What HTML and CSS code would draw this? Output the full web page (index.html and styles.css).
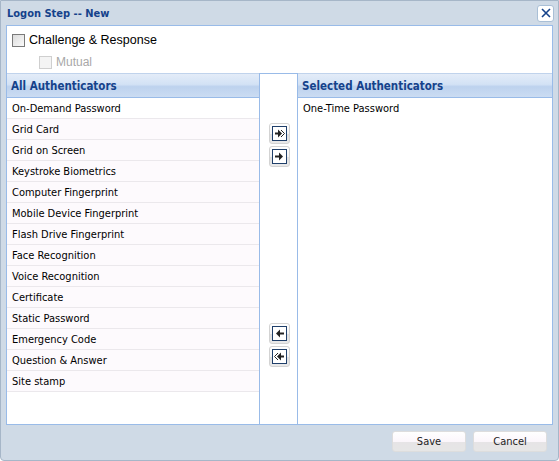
FILE: index.html
```html
<!DOCTYPE html>
<html lang="en">
<head>
    <meta charset="UTF-8">
    <title>Logon Step -- New</title>
    <link rel="stylesheet" href="styles.css">
</head>
<body>
<div class="win">
    <div class="win-head">
        <span class="win-title">Logon Step -- New</span>
        <a class="win-close" href="javascript:;">
            <svg width="14" height="14" viewBox="0 0 14 14"><path d="M3 3 L11 11 M11 3 L3 11" stroke="#15428b" stroke-width="1.6"/></svg>
        </a>
    </div>
    <div class="win-body">
        <div class="opts">
            <label class="chk"><span class="box"></span>Challenge &amp; Response</label>
            <label class="chk sub off"><span class="box"></span>Mutual</label>
        </div>
        <div class="lists">
            <div class="panel left">
                <div class="panel-head">All Authenticators</div>
                <ul class="rows">
                    <li>On-Demand Password</li>
                    <li>Grid Card</li>
                    <li>Grid on Screen</li>
                    <li>Keystroke Biometrics</li>
                    <li>Computer Fingerprint</li>
                    <li>Mobile Device Fingerprint</li>
                    <li>Flash Drive Fingerprint</li>
                    <li>Face Recognition</li>
                    <li>Voice Recognition</li>
                    <li>Certificate</li>
                    <li>Static Password</li>
                    <li>Emergency Code</li>
                    <li>Question &amp; Answer</li>
                    <li>Site stamp</li>
                </ul>
            </div>
            <div class="mid">
                <div class="btns top">
                    <a class="mv"><svg width="15" height="15" viewBox="0 0 15 15"><rect x="0.5" y="0.5" width="14" height="14" fill="#fff" stroke="#1f3f6a"/><path d="M3 6.5h3v-3l4 4-4 4v-3H3z" fill="#222"/><path d="M9 4l3.5 3.5L9 11" fill="none" stroke="#222" stroke-width="1"/></svg></a>
                    <a class="mv"><svg width="15" height="15" viewBox="0 0 15 15"><rect x="0.5" y="0.5" width="14" height="14" fill="#fff" stroke="#1f3f6a"/><path d="M3 6.5h4v-3l4 4-4 4v-3H3z" fill="#222"/></svg></a>
                </div>
                <div class="btns bottom">
                    <a class="mv"><svg width="15" height="15" viewBox="0 0 15 15"><rect x="0.5" y="0.5" width="14" height="14" fill="#fff" stroke="#1f3f6a"/><path d="M12 6.5H8v-3l-4 4 4 4v-3h4z" fill="#222"/></svg></a>
                    <a class="mv"><svg width="15" height="15" viewBox="0 0 15 15"><rect x="0.5" y="0.5" width="14" height="14" fill="#fff" stroke="#1f3f6a"/><path d="M12 6.5H9v-3l-4 4 4 4v-3h3z" fill="#222"/><path d="M6 4L2.5 7.5 6 11" fill="none" stroke="#222" stroke-width="1"/></svg></a>
                </div>
            </div>
            <div class="panel right">
                <div class="panel-head">Selected Authenticators</div>
                <ul class="rows plain">
                    <li>One-Time Password</li>
                </ul>
            </div>
        </div>
    </div>
    <div class="win-foot">
        <a class="btn" href="javascript:;">Save</a>
        <a class="btn" href="javascript:;">Cancel</a>
    </div>
</div>
</body>
</html>
```
FILE: styles.css
```css
*{
    margin: 0;
    padding: 0;
    box-sizing: border-box;
}
a{
    text-decoration: none;
    color: inherit;
}
body{
    font: 11px "DejaVu Sans Condensed", "DejaVu Sans", Tahoma, sans-serif;
    color: #000;
    background: #fff;
}
.win{
    width: 559px;
    height: 461px;
    background: #cfdae6;
    border: 1px solid #a6b6c8;
    border-radius: 0 0 4px 4px;
    display: flex;
    flex-direction: column;
}
.win-head{
    height: 24px;
    display: flex;
    align-items: center;
    justify-content: space-between;
    padding: 0 4px 0 6px;
}
.win-title{
    font-weight: bold;
    color: #15428b;
    font-size: 11px;
}
.win-close{
    width: 17px;
    height: 17px;
    border: 1px solid #a9bfd6;
    border-radius: 3px;
    background: #fff;
    display: flex;
    align-items: center;
    justify-content: center;
}
.win-body{
    margin: 0 5px;
    height: 400px;
    background: #fff;
    border: 1px solid #99bbe8;
    display: flex;
    flex-direction: column;
}
.opts{
    height: 47px;
    padding: 5px 0 0 5px;
}
.chk{
    display: flex;
    align-items: center;
    gap: 4px;
    font: 12.5px "Liberation Sans", Arial, sans-serif;
    height: 18px;
}
.chk .box{
    width: 13px;
    height: 13px;
    border: 1px solid #7a7a7a;
    background: linear-gradient(135deg, #dcdcdc, #fafafa);
}
.chk.sub{
    margin: 4px 0 0 27px;
    font-size: 12px;
}
.chk.off{
    color: #a8a8a8;
}
.chk.off .box{
    border-color: #cfcfcf;
    background: #f4f4f4;
}
.lists{
    flex: 1;
    display: flex;
}
.panel{
    display: flex;
    flex-direction: column;
}
.left{
    width: 252px;
}
.right{
    flex: 1;
}
.panel-head{
    height: 25px;
    padding: 5px 0 0 4px;
    font-weight: bold;
    font-size: 11.5px;
    color: #15428b;
    border-top: 1px solid #c0d3ec;
    border-bottom: 1px solid #99bbe8;
    background: linear-gradient(#e3ecf8, #d3e2f5 45%, #bdd2ee 55%, #cbdcf2);
}
.rows{
    list-style: none;
}
.rows li{
    height: 21px;
    line-height: 21px;
    padding-left: 5px;
    border-bottom: 1px solid #ebe8ec;
    background: #fdfafd;
}
.rows li:first-child{
    background: #fff;
}
.rows.plain li{
    border-bottom: none;
    background: #fff;
}
.mid{
    width: 39px;
    border: 1px solid #99bbe8;
    border-bottom: none;
    display: flex;
    flex-direction: column;
    align-items: center;
    padding-top: 49px;
}
.btns{
    display: flex;
    flex-direction: column;
    gap: 2px;
    margin-left: 1px;
}
.btns.bottom{
    margin-top: 156px;
}
.mv{
    width: 21px;
    height: 21px;
    border: 1px solid #d3d3d3;
    border-radius: 3px;
    background: linear-gradient(#fff, #f3f3f3 50%, #dedede 51%, #e9e9e9);
    display: flex;
    align-items: center;
    justify-content: center;
}
.mv svg{
    display: block;
}
.win-foot{
    flex: 1;
    display: flex;
    justify-content: flex-end;
    gap: 7px;
    padding: 6px 11px 0 0;
}
.btn{
    width: 74px;
    height: 21px;
    border: 1px solid #dddddd;
    border-radius: 3px;
    background: linear-gradient(#fff, #fbf6fb 50%, #e6e4e6 52%, #e6e6e6);
    text-align: center;
    line-height: 19px;
    font-size: 11px;
    color: #222;
}
```
